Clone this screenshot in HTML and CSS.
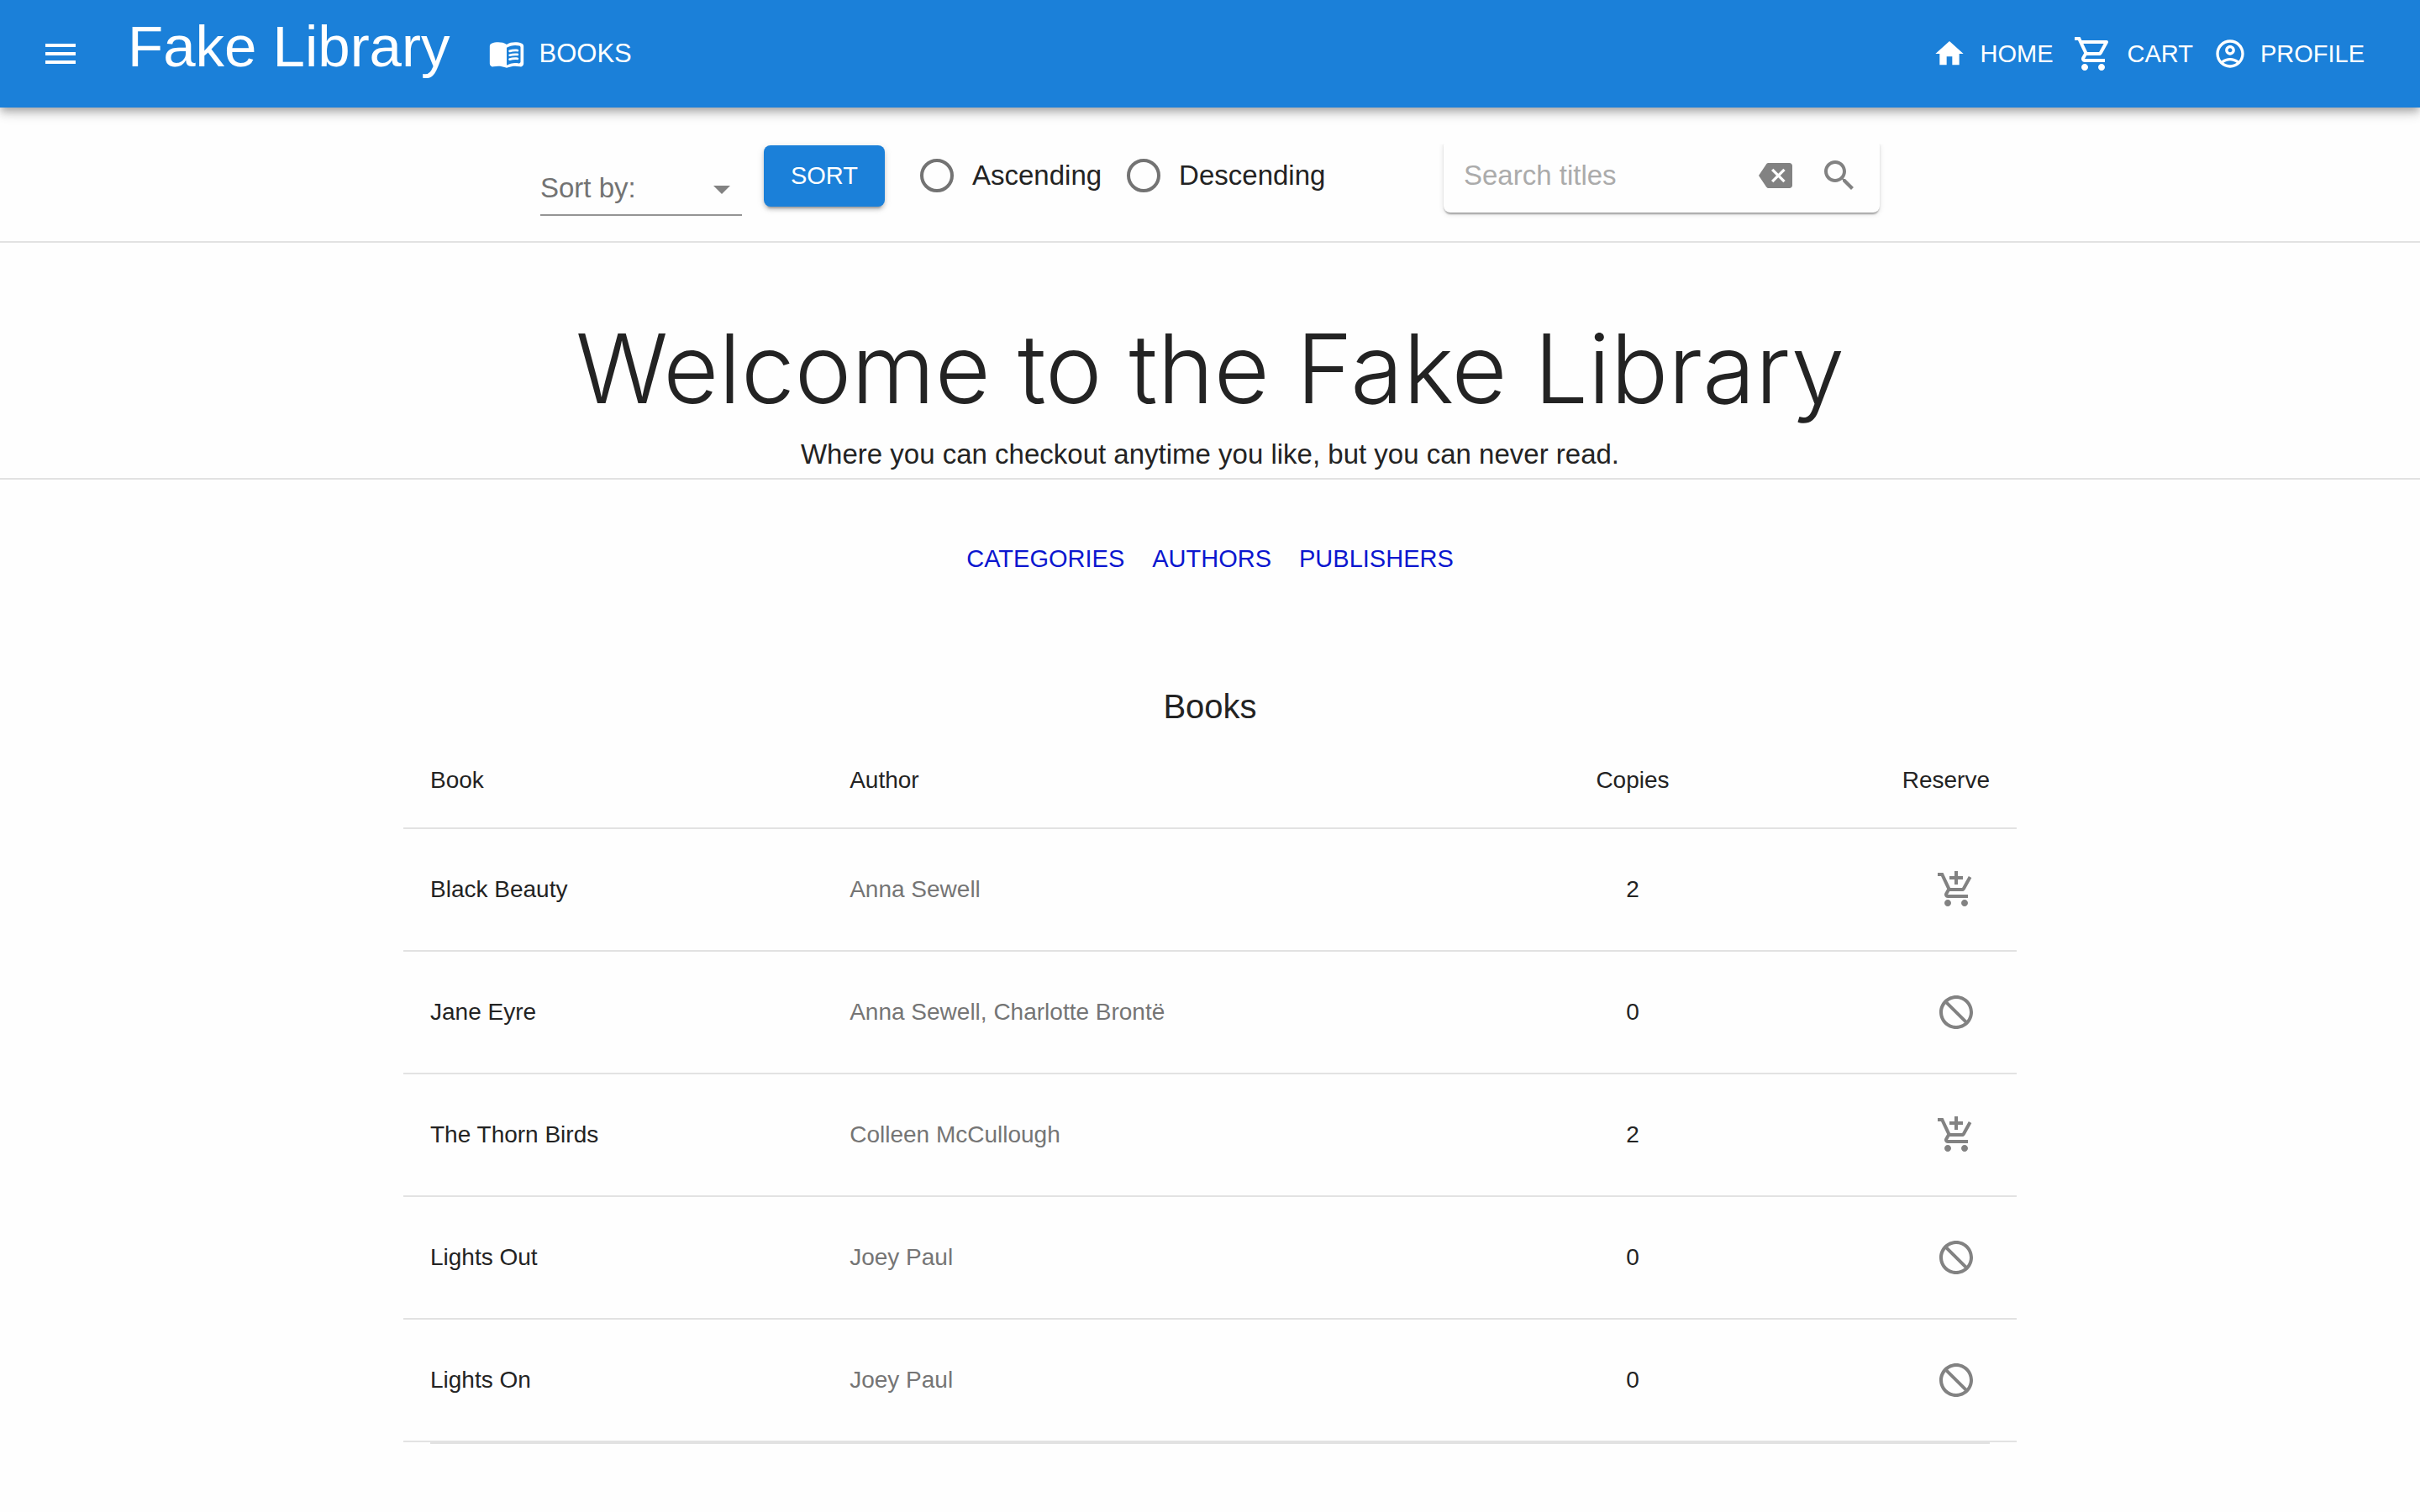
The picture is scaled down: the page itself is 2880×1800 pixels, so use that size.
FILE: index.html
```html
<!DOCTYPE html>
<html lang="en">
<head>
<meta charset="utf-8">
<meta name="viewport" content="width=device-width, initial-scale=1">
<title>Fake Library</title>
<link rel="stylesheet" href="styles.css">
</head>
<body>
<svg class="sprite" aria-hidden="true">
  <symbol id="menu" viewBox="0 0 24 24"><path d="M3 18h18v-2H3v2zm0-5h18v-2H3v2zm0-7v2h18V6H3z"/></symbol>
  <symbol id="book" viewBox="0 0 24 24"><path d="M17.5 4.5c-1.95 0-4.05.4-5.5 1.5-1.45-1.1-3.55-1.5-5.5-1.5-1.45 0-2.99.22-4.28.79C1.49 5.62 1 6.33 1 7.14v11.28c0 1.3 1.22 2.26 2.48 1.94.98-.25 2.02-.36 3.02-.36 1.56 0 3.22.26 4.56.92.6.3 1.28.3 1.87 0 1.34-.67 3-.92 4.56-.92 1 0 2.04.11 3.02.36 1.26.33 2.48-.63 2.48-1.94V7.14c0-.81-.49-1.52-1.22-1.85-1.28-.57-2.82-.79-4.27-.79zM21 17.23c0 .63-.58 1.09-1.2.98-.75-.14-1.53-.2-2.3-.2-1.7 0-4.15.65-5.5 1.5V8c1.35-.85 3.8-1.5 5.5-1.5.92 0 1.83.09 2.7.28.46.1.8.51.8.98v9.47z"/><path d="M13.98 11.01c-.32 0-.61-.2-.71-.52-.13-.39.09-.82.48-.94 1.54-.5 3.53-.66 5.36-.45.41.05.71.42.66.83s-.42.71-.83.66c-1.62-.19-3.39-.04-4.73.39-.08.01-.16.03-.23.03zm0 2.66c-.32 0-.61-.2-.71-.52-.13-.39.09-.82.48-.94 1.53-.5 3.53-.66 5.36-.45.41.05.71.42.66.83s-.42.71-.83.66c-1.62-.19-3.39-.04-4.73.39-.08.02-.16.03-.23.03zm0 2.66c-.32 0-.61-.2-.71-.52-.13-.39.09-.82.48-.94 1.53-.5 3.53-.66 5.36-.45.41.05.71.42.66.83s-.42.7-.83.66c-1.62-.19-3.39-.04-4.73.39-.08.02-.16.03-.23.03z"/></symbol>
  <symbol id="home" viewBox="0 0 24 24"><path d="M10 20v-6h4v6h5v-8h3L12 3 2 12h3v8z"/></symbol>
  <symbol id="cart" viewBox="0 0 24 24"><path d="M15.55 13c.75 0 1.41-.41 1.75-1.03l3.58-6.49c.37-.66-.11-1.48-.87-1.48H5.21l-.94-2H1v2h2l3.6 7.59-1.35 2.44C4.52 15.37 5.48 17 7 17h12v-2H7l1.1-2h7.45zM6.16 6h12.15l-2.76 5H8.53L6.16 6zM7 18c-1.1 0-1.99.9-1.99 2S5.9 22 7 22s2-.9 2-2-.9-2-2-2zm10 0c-1.1 0-1.99.9-1.99 2s.89 2 1.99 2 2-.9 2-2-.9-2-2-2z"/></symbol>
  <symbol id="profile" viewBox="0 0 24 24"><path d="M12 2C6.48 2 2 6.48 2 12s4.48 10 10 10 10-4.48 10-10S17.52 2 12 2zM7.35 18.5C8.66 17.56 10.26 17 12 17s3.34.56 4.65 1.5c-1.31.94-2.91 1.5-4.65 1.5s-3.34-.56-4.65-1.5zm10.79-1.38C16.45 15.8 14.32 15 12 15s-4.45.8-6.14 2.12C4.7 15.73 4 13.95 4 12c0-4.42 3.58-8 8-8s8 3.58 8 8c0 1.95-.7 3.73-1.86 5.12z"/><path d="M12 6c-1.93 0-3.5 1.57-3.5 3.5S10.07 13 12 13s3.5-1.57 3.5-3.5S13.93 6 12 6zm0 5c-.83 0-1.5-.67-1.5-1.5S11.17 8 12 8s1.5.67 1.5 1.5S12.83 11 12 11z"/></symbol>
  <symbol id="arrow" viewBox="0 0 24 24"><path d="M7 10l5 5 5-5z"/></symbol>
  <symbol id="clear" viewBox="0 0 24 24"><path d="M22 3H7c-.69 0-1.23.35-1.59.88L0 12l5.41 8.11c.36.53.9.89 1.59.89h15c1.1 0 2-.9 2-2V5c0-1.1-.9-2-2-2zm-3 12.59L17.59 17 14 13.41 10.41 17 9 15.59 12.59 12 9 8.41 10.41 7 14 10.59 17.59 7 19 8.41 15.41 12 19 15.59z"/></symbol>
  <symbol id="search" viewBox="0 0 24 24"><path d="M15.5 14h-.79l-.28-.27C15.41 12.59 16 11.11 16 9.5 16 5.91 13.09 3 9.5 3S3 5.91 3 9.5 5.91 16 9.5 16c1.61 0 3.09-.59 4.23-1.57l.27.28v.79l5 4.99L20.49 19l-4.99-5zm-6 0C7.01 14 5 11.99 5 9.5S7.01 5 9.5 5 14 7.01 14 9.5 11.99 14 9.5 14z"/></symbol>
  <symbol id="add" viewBox="0 0 24 24"><path d="M11 9h2V6h3V4h-3V1h-2v3H8v2h3v3zm-4 9c-1.1 0-1.99.9-1.99 2S5.9 22 7 22s2-.9 2-2-.9-2-2-2zm10 0c-1.1 0-1.99.9-1.99 2s.89 2 1.99 2 2-.9 2-2-.9-2-2-2zm-8.9-5h7.45c.75 0 1.41-.41 1.75-1.03l3.86-7.01L19.42 4l-3.87 7H8.53L4.27 2H1v2h2l3.6 7.59-1.35 2.44C4.52 15.37 5.48 17 7 17h12v-2H7l1.1-2z"/></symbol>
  <symbol id="none" viewBox="0 0 24 24"><path d="M12 2C6.48 2 2 6.48 2 12s4.48 10 10 10 10-4.48 10-10S17.52 2 12 2zm0 18c-4.42 0-8-3.58-8-8 0-1.85.63-3.55 1.69-4.9L16.9 18.31C15.55 19.37 13.85 20 12 20zm6.31-3.1L7.1 5.69C8.45 4.63 10.15 4 12 4c4.42 0 8 3.58 8 8 0 1.85-.63 3.55-1.69 4.9z"/></symbol>
</svg>

<header class="app-bar">
  <button class="icon-button" type="button" aria-label="Menu"><svg class="icon"><use href="#menu"/></svg></button>
  <span class="brand">Fake Library</span>
  <a class="nav-link nav-link-large" href="#books"><svg class="icon icon-medium"><use href="#book"/></svg>BOOKS</a>
  <nav class="nav">
    <a class="nav-link" href="#home"><svg class="icon icon-small"><use href="#home"/></svg>HOME</a>
    <a class="nav-link" href="#cart"><svg class="icon"><use href="#cart"/></svg>CART</a>
    <a class="nav-link" href="#profile"><svg class="icon icon-small"><use href="#profile"/></svg>PROFILE</a>
  </nav>
</header>

<section class="filters">
  <div class="filters-inner">
    <form class="sorter">
      <div class="select">
        <select class="select-field" aria-label="Sort by">
          <option>Sort by:</option>
          <option>Title</option>
          <option>Author</option>
        </select>
        <svg class="icon select-arrow"><use href="#arrow"/></svg>
      </div>
      <button class="sort-button" type="button">SORT</button>
      <div class="radios">
        <label class="radio"><input class="radio-dot" type="radio" name="order">Ascending</label>
        <label class="radio"><input class="radio-dot" type="radio" name="order">Descending</label>
      </div>
    </form>
    <form class="search">
      <input class="search-field" type="text" placeholder="Search titles" aria-label="Search titles">
      <button class="icon-button" type="button" aria-label="Clear"><svg class="icon icon-small"><use href="#clear"/></svg></button>
      <button class="icon-button" type="button" aria-label="Search"><svg class="icon"><use href="#search"/></svg></button>
    </form>
  </div>
</section>

<section class="hero">
  <h1 class="hero-title">Welcome to the Fake Library</h1>
  <p class="hero-text">Where you can checkout anytime you like, but you can never read.</p>
</section>

<nav class="browse">
  <a class="browse-link" href="#categories">CATEGORIES</a>
  <a class="browse-link" href="#authors">AUTHORS</a>
  <a class="browse-link" href="#publishers">PUBLISHERS</a>
</nav>

<main class="books">
  <h2 class="books-title">Books</h2>
  <table class="table">
    <colgroup><col class="col-book"><col class="col-author"><col class="col-copies"><col></colgroup>
    <thead>
      <tr><th>Book</th><th>Author</th><th class="center">Copies</th><th class="right">Reserve</th></tr>
    </thead>
    <tbody>
      <tr><td>Black Beauty</td><td class="muted">Anna Sewell</td><td class="center">2</td><td><button class="icon-button reserve" type="button" aria-label="Reserve Black Beauty"><svg class="icon"><use href="#add"/></svg></button></td></tr>
      <tr><td>Jane Eyre</td><td class="muted">Anna Sewell, Charlotte Brontë</td><td class="center">0</td><td><button class="icon-button reserve" type="button" aria-label="Jane Eyre is unavailable"><svg class="icon"><use href="#none"/></svg></button></td></tr>
      <tr><td>The Thorn Birds</td><td class="muted">Colleen McCullough</td><td class="center">2</td><td><button class="icon-button reserve" type="button" aria-label="Reserve The Thorn Birds"><svg class="icon"><use href="#add"/></svg></button></td></tr>
      <tr><td>Lights Out</td><td class="muted">Joey Paul</td><td class="center">0</td><td><button class="icon-button reserve" type="button" aria-label="Lights Out is unavailable"><svg class="icon"><use href="#none"/></svg></button></td></tr>
      <tr><td>Lights On</td><td class="muted">Joey Paul</td><td class="center">0</td><td><button class="icon-button reserve" type="button" aria-label="Lights On is unavailable"><svg class="icon"><use href="#none"/></svg></button></td></tr>
    </tbody>
  </table>
  <hr class="books-end">
</main>
</body>
</html>
```
FILE: styles.css
```css
:root {
  --primary: #1b80d9;
  --text: #232323;
  --muted: #757575;
  --icon: #828282;
  --line: #e2e2e2;
}

* {
  box-sizing: border-box;
}

body {
  margin: 0;
  background: #fefefe;
  color: var(--text);
  font: 28px/40px "Liberation Sans", Arial, Helvetica, sans-serif;
}

button,
input,
select {
  font: inherit;
  color: inherit;
}

a {
  text-decoration: none;
}

.sprite {
  display: none;
}

.icon {
  display: block;
  flex: none;
  width: 48px;
  height: 48px;
  fill: currentColor;
}

.icon-medium {
  width: 44px;
  height: 44px;
}

.icon-small {
  width: 40px;
  height: 40px;
}

.icon-button {
  flex: none;
  padding: 0;
  border: 0;
  background: none;
  cursor: pointer;
}

/* App bar */
.app-bar {
  position: relative;
  display: flex;
  align-items: center;
  height: 128px;
  padding: 0 66px 0 48px;
  background: var(--primary);
  color: #fff;
  box-shadow: 0 4px 8px -2px rgba(0, 0, 0, 0.2), 0 8px 10px rgba(0, 0, 0, 0.14), 0 2px 20px rgba(0, 0, 0, 0.12);
}

.brand {
  margin: 0 46px 16px 56px;
  font-size: 69px;
  line-height: 84px;
}

.nav {
  display: flex;
  gap: 24px;
  margin-left: auto;
}

.nav-link {
  display: flex;
  align-items: center;
  gap: 16px;
  color: inherit;
  font-size: 29px;
}

.nav-link-large {
  font-size: 31px;
}

/* Sort and search */
.filters {
  padding: 33px 48px 30px;
  border-bottom: 2px solid var(--line);
}

.filters-inner {
  display: flex;
  align-items: center;
  justify-content: space-between;
  max-width: 1594px;
  margin: 0 auto;
}

.sorter {
  display: flex;
  align-items: center;
  font-size: 33px;
}

.select {
  position: relative;
  width: 240px;
  margin-right: 26px;
  padding-top: 32px;
}

.select-field {
  display: block;
  width: 100%;
  height: 64px;
  padding: 0;
  border: 0;
  border-bottom: 2px solid #949494;
  border-radius: 0;
  background: none;
  color: #737373;
  appearance: none;
}

.select-arrow {
  position: absolute;
  right: 0;
  bottom: 8px;
  color: var(--icon);
  pointer-events: none;
}

.sort-button {
  width: 144px;
  height: 73px;
  margin-right: 38px;
  border: 0;
  border-radius: 8px;
  background: var(--primary);
  color: #fff;
  font-size: 29px;
  box-shadow: 0 6px 2px -4px rgba(0, 0, 0, 0.2), 0 4px 4px rgba(0, 0, 0, 0.14), 0 2px 10px rgba(0, 0, 0, 0.12);
}

.radios {
  display: flex;
  gap: 26px;
}

.radio {
  display: flex;
  align-items: center;
  gap: 22px;
}

.radio-dot {
  width: 40px;
  height: 40px;
  margin: 0 0 0 4px;
  border: 4px solid #737373;
  border-radius: 50%;
  appearance: none;
}

.search {
  display: flex;
  align-items: center;
  width: 519px;
  height: 87px;
  padding: 0 24px;
  border-radius: 8px;
  color: var(--icon);
  gap: 32px;
  box-shadow: 0 4px 2px -2px rgba(0, 0, 0, 0.2), 0 2px 2px rgba(0, 0, 0, 0.14), 0 2px 6px rgba(0, 0, 0, 0.12);
  clip-path: inset(6px -10px -10px);
}

.search-field {
  flex: 1;
  min-width: 0;
  padding: 0;
  border: 0;
  background: none;
  color: var(--text);
  font-size: 33px;
}

.search-field::placeholder {
  color: #ababab;
}

/* Hero */
.hero {
  padding: 78px 48px 4px;
  border-bottom: 2px solid var(--line);
  text-align: center;
}

.hero-title {
  margin: 0 0 6px;
  font: 300 114px/144px Inter, "Liberation Sans", Arial, sans-serif;
}

.hero-text {
  margin: 0;
  font-size: 33px;
  line-height: 48px;
}

.browse {
  display: flex;
  justify-content: center;
  gap: 33px;
  padding: 74px 48px;
}

.browse-link {
  color: #0b16cf;
  font-size: 29px;
}

/* Book list */
.books {
  max-width: 1920px;
  margin: 0 auto;
}

.books-title {
  margin: 50px 0 0;
  font-size: 40px;
  font-weight: 400;
  line-height: 64px;
  text-align: center;
}

.table {
  width: 100%;
  border-collapse: separate;
  border-spacing: 0;
  table-layout: fixed;
}

.col-book {
  width: 26%;
}

.col-author {
  width: 44%;
}

.col-copies {
  width: 238px;
}

.table th,
.table td {
  height: 146px;
  padding: 0 32px;
  border-bottom: 2px solid var(--line);
  font-weight: 400;
  text-align: left;
}

.table th {
  height: 114px;
}

.table .muted {
  color: var(--muted);
}

.table .center {
  padding: 0;
  text-align: center;
}

.table .right {
  text-align: right;
}

.reserve {
  display: block;
  margin: 0 16px 0 auto;
  color: var(--icon);
}

.books-end {
  margin: 0 32px;
  border: 0;
  border-top: 2px solid var(--line);
}
```
